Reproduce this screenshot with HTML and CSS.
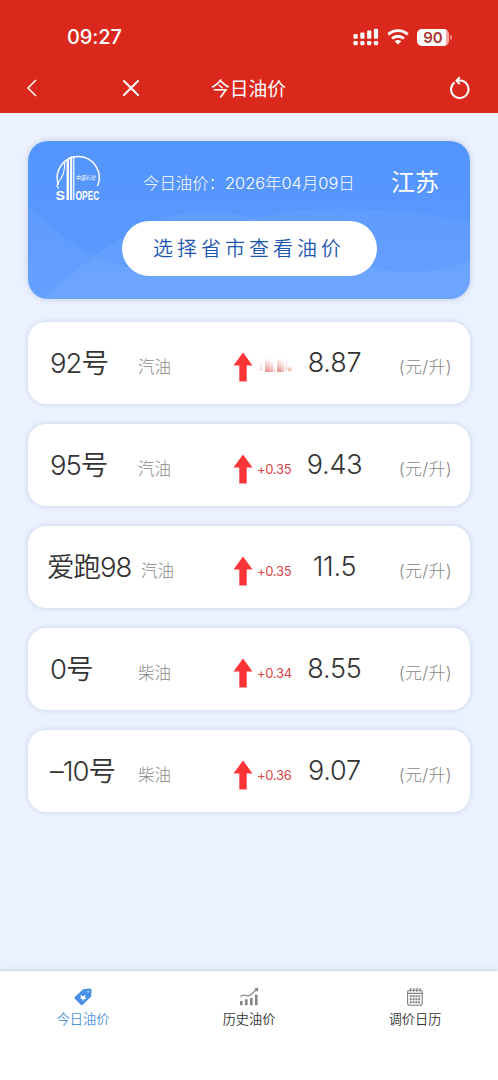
FILE: index.html
```html
<!DOCTYPE html>
<html lang="zh-CN">

<head>
    <meta charset="UTF-8">
    <meta name="viewport" content="width=device-width, initial-scale=1.0">
    <title>今日油价</title>
    <link rel="stylesheet" href="styles.css">
</head>

<body>
    <!-- 頂部 -->
    <header class="header">
        <div class="status">
            <span class="time">09:27</span>
            <div class="status_icons">
                <svg class="signal" width="26" height="18" viewBox="0 0 26 18" fill="#fff">
                    <rect x="0.5" y="6" width="4.2" height="4.8" rx="1" />
                    <rect x="7.3" y="4.4" width="4.2" height="6.4" rx="1" />
                    <rect x="14.1" y="2.6" width="4.2" height="8.2" rx="1" />
                    <rect x="20.9" y="0.8" width="4.2" height="10" rx="1" />
                    <rect x="0.5" y="13" width="4.2" height="4.2" rx="1.2" />
                    <rect x="7.3" y="13" width="4.2" height="4.2" rx="1.2" />
                    <rect x="14.1" y="13" width="4.2" height="4.2" rx="1.2" />
                    <rect x="20.9" y="13" width="4.2" height="4.2" rx="1.2" />
                </svg>
                <svg class="wifi" width="22" height="16" viewBox="0 0 22 16" fill="none" stroke="#fff" stroke-width="2.9">
                    <path d="M1.3 5.4C6.8 0.4 15.2 0.4 20.7 5.4" />
                    <path d="M5 9.5C8.5 6.4 13.5 6.4 17 9.5" />
                    <path d="M11 15.6L7.7 12.2C9.6 10.5 12.4 10.5 14.3 12.2Z" fill="#fff" stroke="none" />
                </svg>
                <div class="battery"><span>90</span></div>
            </div>
        </div>
        <div class="nav">
            <svg class="back" width="12" height="20" viewBox="0 0 12 20" fill="none" stroke="#fff" stroke-width="1.5">
                <path d="M10 2L2 10L10 18" />
            </svg>
            <svg class="close" width="18" height="18" viewBox="0 0 18 18" fill="none" stroke="#fff" stroke-width="2.1" stroke-linecap="round">
                <path d="M2 2L16 16M16 2L2 16" />
            </svg>
            <h1>今日油价</h1>
            <svg class="refresh" width="22" height="24" viewBox="0 0 22 24" fill="none" stroke="#fff" stroke-width="2">
                <path d="M4.9 6.9A8.7 8.7 0 1 0 11 4.6H8" stroke-linecap="round" />
                <path d="M10.3 1.8L7.4 4.7L10.3 7.6" stroke-linecap="round" stroke-linejoin="round" />
            </svg>
        </div>
    </header>

    <main class="main">
        <!-- 省市選擇 -->
        <section class="banner">
            <svg class="banner_bg" viewBox="0 0 442 158" preserveAspectRatio="none">
                <path d="M0 66C34 96 63 119 98 126C150 137 180 66 300 68C355 67 400 72 442 81V158H0Z" fill="#fff" fill-opacity="0.05" />
                <path d="M14 158C70 110 120 70 180 70C260 72 310 133 385 131C408 130 424 127 442 120V158Z" fill="#fff" fill-opacity="0.06" />
            </svg>
            <div class="banner_top">
                <svg class="logo" width="46" height="50" viewBox="0 0 46 50">
                    <path d="M3.6 32A21 21 0 1 1 42.5 33" fill="none" stroke="#fff" stroke-width="1.5" />
                    <path d="M11.6 47V8L14 5V47ZM15 47V4L17.2 3V47Z" fill="#fff" />
                    <path d="M18.2 47V3.4H19.4V47Z" fill="#fff" />
                    <path d="M9.8 8C9.6 19 8 24 3.4 29C1.6 31 1.8 33.5 3.6 35.6" fill="none" stroke="#fff" stroke-width="1.1" />
                    <text class="logo_cn" x="20.5" y="26.5" textLength="20" lengthAdjust="spacingAndGlyphs">中国石化</text>
                    <text class="logo_en" x="0.5" y="47" textLength="9.5" lengthAdjust="spacingAndGlyphs">S</text>
                    <text class="logo_en" x="20.4" y="47" textLength="24" lengthAdjust="spacingAndGlyphs">OPEC</text>
                </svg>
                <p class="date">今日油价：2026年04月09日</p>
                <p class="province">江苏</p>
            </div>
            <button class="btn">选择省市查看油价</button>
        </section>

        <!-- 油價列表 -->
        <ul class="list">
            <li class="item">
                <span class="name">92号</span>
                <span class="type">汽油</span>
                <svg class="arrow" width="20" height="30" viewBox="0 0 20 30"><path d="M10 0.5L19.5 13.5H13.7V29.5H6.3V13.5H0.5Z" /></svg>
                <svg class="smudge" width="36" height="16" viewBox="0 0 36 16">
                    <defs>
                        <linearGradient id="fade" x1="0" y1="0" x2="0" y2="1">
                            <stop offset="0" stop-color="#f2a5a0" stop-opacity="0.15" />
                            <stop offset="1" stop-color="#e0736f" stop-opacity="0.8" />
                        </linearGradient>
                        <filter id="soft"><feGaussianBlur stdDeviation="0.6 0.4" /></filter>
                    </defs>
                    <g fill="url(#fade)" filter="url(#soft)">
                        <rect x="3" y="3" width="2.5" height="10" opacity="0.4" />
                        <rect x="8" y="1" width="4" height="13" />
                        <rect x="12" y="3" width="4" height="11" opacity="0.8" />
                        <rect x="16.5" y="8" width="2" height="6" opacity="0.5" />
                        <rect x="20" y="1" width="4" height="13" />
                        <rect x="24" y="3" width="3" height="11" opacity="0.7" />
                        <rect x="28" y="3" width="2.5" height="10" opacity="0.4" />
                        <rect x="31" y="8" width="3.5" height="5" opacity="0.8" />
                    </g>
                </svg>
                <span class="price">8.87</span>
                <span class="unit">(元/升)</span>
            </li>
            <li class="item">
                <span class="name">95号</span>
                <span class="type">汽油</span>
                <svg class="arrow" width="20" height="30" viewBox="0 0 20 30"><path d="M10 0.5L19.5 13.5H13.7V29.5H6.3V13.5H0.5Z" /></svg>
                <span class="change">+0.35</span>
                <span class="price">9.43</span>
                <span class="unit">(元/升)</span>
            </li>
            <li class="item item_long">
                <span class="name">爱跑98</span>
                <span class="type">汽油</span>
                <svg class="arrow" width="20" height="30" viewBox="0 0 20 30"><path d="M10 0.5L19.5 13.5H13.7V29.5H6.3V13.5H0.5Z" /></svg>
                <span class="change">+0.35</span>
                <span class="price">11.5</span>
                <span class="unit">(元/升)</span>
            </li>
            <li class="item">
                <span class="name">0号</span>
                <span class="type">柴油</span>
                <svg class="arrow" width="20" height="30" viewBox="0 0 20 30"><path d="M10 0.5L19.5 13.5H13.7V29.5H6.3V13.5H0.5Z" /></svg>
                <span class="change">+0.34</span>
                <span class="price">8.55</span>
                <span class="unit">(元/升)</span>
            </li>
            <li class="item">
                <span class="name">–10号</span>
                <span class="type">柴油</span>
                <svg class="arrow" width="20" height="30" viewBox="0 0 20 30"><path d="M10 0.5L19.5 13.5H13.7V29.5H6.3V13.5H0.5Z" /></svg>
                <span class="change">+0.36</span>
                <span class="price">9.07</span>
                <span class="unit">(元/升)</span>
            </li>
        </ul>
    </main>

    <!-- 底部選單 -->
    <footer class="tabbar">
        <a class="tab active">
            <svg width="20" height="20" viewBox="0 0 20 20">
                <path d="M10.2 2.2L16.5 1.4Q18.4 1.3 18.5 3.2L18.2 9.4L10 17.6Q8.8 18.7 7.6 17.6L2 12Q0.9 10.8 2 9.7Z" fill="#4a8fe6" />
                <circle cx="15.2" cy="4.6" r="1" fill="#a9cbf5" />
                <path d="M7 7.8L10.2 9.2L12.4 7.7L11.9 10.4L13.6 12L11 12L9.8 14.4L9.2 11.8L6.4 11.2L8.4 10.1Z" fill="#fff" />
            </svg>
            <span>今日油价</span>
        </a>
        <a class="tab">
            <svg width="20" height="20" viewBox="0 0 20 20" fill="#858585">
                <path d="M1 14h2.6v4.3H1ZM6 12.3h2.6v6H6ZM11 11h2.6v7.3H11ZM16 7.5h2.6v10.8H16Z" />
                <path d="M1.4 9.7Q4 7.5 6.5 8.4Q10 9.7 12.7 7L17.6 2.3" fill="none" stroke="#858585" stroke-width="1.2" />
                <path d="M15.2 1.5L19.3 0.8L18.7 4.9Z" />
            </svg>
            <span>历史油价</span>
        </a>
        <a class="tab">
            <svg width="20" height="20" viewBox="0 0 20 20" fill="none" stroke="#808080" stroke-width="1.1">
                <rect x="2.6" y="3.2" width="14.6" height="15" rx="2" />
                <path d="M3 6.4H17M5.4 4.7V2.6Q5.4 1.3 6.6 1.8M8.6 4.7V2.6Q8.6 1.3 9.8 1.8M11.8 4.7V2.6Q11.8 1.3 13 1.8M15 4.7V2.6Q15 1.3 16 2" />
                <path d="M4.8 9.2H15.2M4.8 12.2H15.2M4.8 15.2H15.2" stroke-width="1.9" stroke-dasharray="2 0.8" />
            </svg>
            <span>调价日历</span>
        </a>
    </footer>
</body>

</html>
```

FILE: styles.css
```css
* {
    padding: 0;
    margin: 0;
    box-sizing: border-box;
}

body {
    height: 1080px;
    display: flex;
    flex-direction: column;
    overflow: hidden;
    background-color: #ebf1fe;
    font-family: Inter, "Noto Sans CJK SC", sans-serif;
    color: #333;
}

svg {
    display: block;
}

/* 頂部 */
.header {
    height: 113px;
    padding-top: 23px;
    background-color: #da291c;
    color: #fff;
}

.status {
    height: 28px;
    display: flex;
    align-items: center;
    justify-content: space-between;
    padding: 0 46px 0 67px;
}

.time {
    font-size: 20px;
    font-weight: 500;
    letter-spacing: -0.1px;
}

.status_icons {
    display: flex;
    align-items: center;
    gap: 8px;
}

.battery {
    position: relative;
    width: 32px;
    height: 17px;
    margin-right: 3px;
    border-radius: 5px;
    background: linear-gradient(90deg, #fff 29px, #f3a9a3 29px);
    color: #a9352c;
    font-size: 15px;
    font-weight: 600;
    line-height: 17px;
    text-align: center;
}

.battery::after {
    content: "";
    position: absolute;
    right: -3px;
    top: 6px;
    width: 2px;
    height: 5px;
    border-radius: 0 2px 2px 0;
    background-color: #ee8e87;
}

.nav {
    height: 62px;
    display: grid;
    grid-template-columns: 96px 89px 1fr 185px;
    align-items: center;
    padding: 12px 27px 0 26px;
}

.nav h1 {
    padding-top: 3px;
    font-size: 18.8px;
    font-weight: 400;
    line-height: 28px;
    white-space: nowrap;
}

.refresh {
    justify-self: end;
}

.main {
    flex: 1;
    padding: 28px 28px 0;
}

/* 藍色區塊 */
.banner {
    position: relative;
    height: 158px;
    border-radius: 20px;
    overflow: hidden;
    background: linear-gradient(180deg, #5394fe, #5c9bff);
    box-shadow: 0 0 6px rgba(80, 100, 150, 0.25);
    color: #fff;
}

.banner_bg {
    position: absolute;
    left: 0;
    top: 0;
    width: 100%;
    height: 100%;
}

.banner_top {
    position: relative;
    height: 80px;
    display: flex;
    align-items: center;
    padding: 2px 31px 0 27px;
}

.logo {
    margin-top: -8px;
    overflow: visible;
}

.logo_cn {
    font-size: 6px;
    font-style: italic;
    fill: #fff;
}

.logo_en {
    font-family: "Liberation Sans", sans-serif;
    font-size: 13.5px;
    font-weight: 700;
    fill: #fff;
}

.date {
    margin-left: 42px;
    font-size: 16.4px;
    font-weight: 300;
    white-space: nowrap;
}

.province {
    margin-left: auto;
    padding-bottom: 4px;
    font-size: 24px;
    white-space: nowrap;
}

.btn {
    position: relative;
    display: block;
    width: 255px;
    height: 55px;
    margin: 0 auto;
    padding-bottom: 3px;
    border: none;
    border-radius: 28px;
    background-color: #fff;
    color: #1d56b0;
    font-family: inherit;
    font-size: 20px;
    font-weight: 350;
    letter-spacing: 4px;
    white-space: nowrap;
}

/* 列表 */
.list {
    margin-top: 23px;
    display: flex;
    flex-direction: column;
    gap: 20px;
    list-style: none;
}

.item {
    height: 82px;
    display: grid;
    grid-template-columns: 88px 95px 24px 36px 83px 1fr;
    align-items: center;
    padding: 0 18px 0 22px;
    border-radius: 18px;
    background-color: #fff;
    box-shadow: 0 0 5px rgba(60, 80, 140, 0.22);
    white-space: nowrap;
}

.item_long {
    grid-template-columns: 94px 92px 24px 36px 83px 1fr;
    padding-left: 19px;
}

.name,
.price {
    font-size: 27px;
    font-weight: 350;
    line-height: 40px;
}

.name {
    font-size: 27.5px;
    letter-spacing: -1px;
}

.price {
    letter-spacing: -0.2px;
    text-align: center;
}

.type,
.unit {
    padding-top: 5px;
    color: #888;
    font-size: 16.5px;
    font-weight: 300;
}

.unit {
    font-size: 17px;
    letter-spacing: 0.3px;
    text-align: right;
}

.arrow {
    margin-top: 7px;
    fill: #fb3438;
}

.change {
    padding-top: 8px;
    color: #d94549;
    font-size: 13px;
    letter-spacing: -0.3px;
}

.smudge {
    margin-top: 6px;
}

/* 底部選單 */
.tabbar {
    height: 109px;
    display: grid;
    grid-template-columns: repeat(3, 1fr);
    padding-top: 16px;
    background-color: #fff;
    box-shadow: 0 -1px 4px rgba(60, 70, 110, 0.18);
}

.tab {
    display: flex;
    flex-direction: column;
    align-items: center;
    font-size: 13.2px;
    font-weight: 350;
    line-height: 20px;
    gap: 2px;
}

.active {
    color: #4f93d8;
}
```
